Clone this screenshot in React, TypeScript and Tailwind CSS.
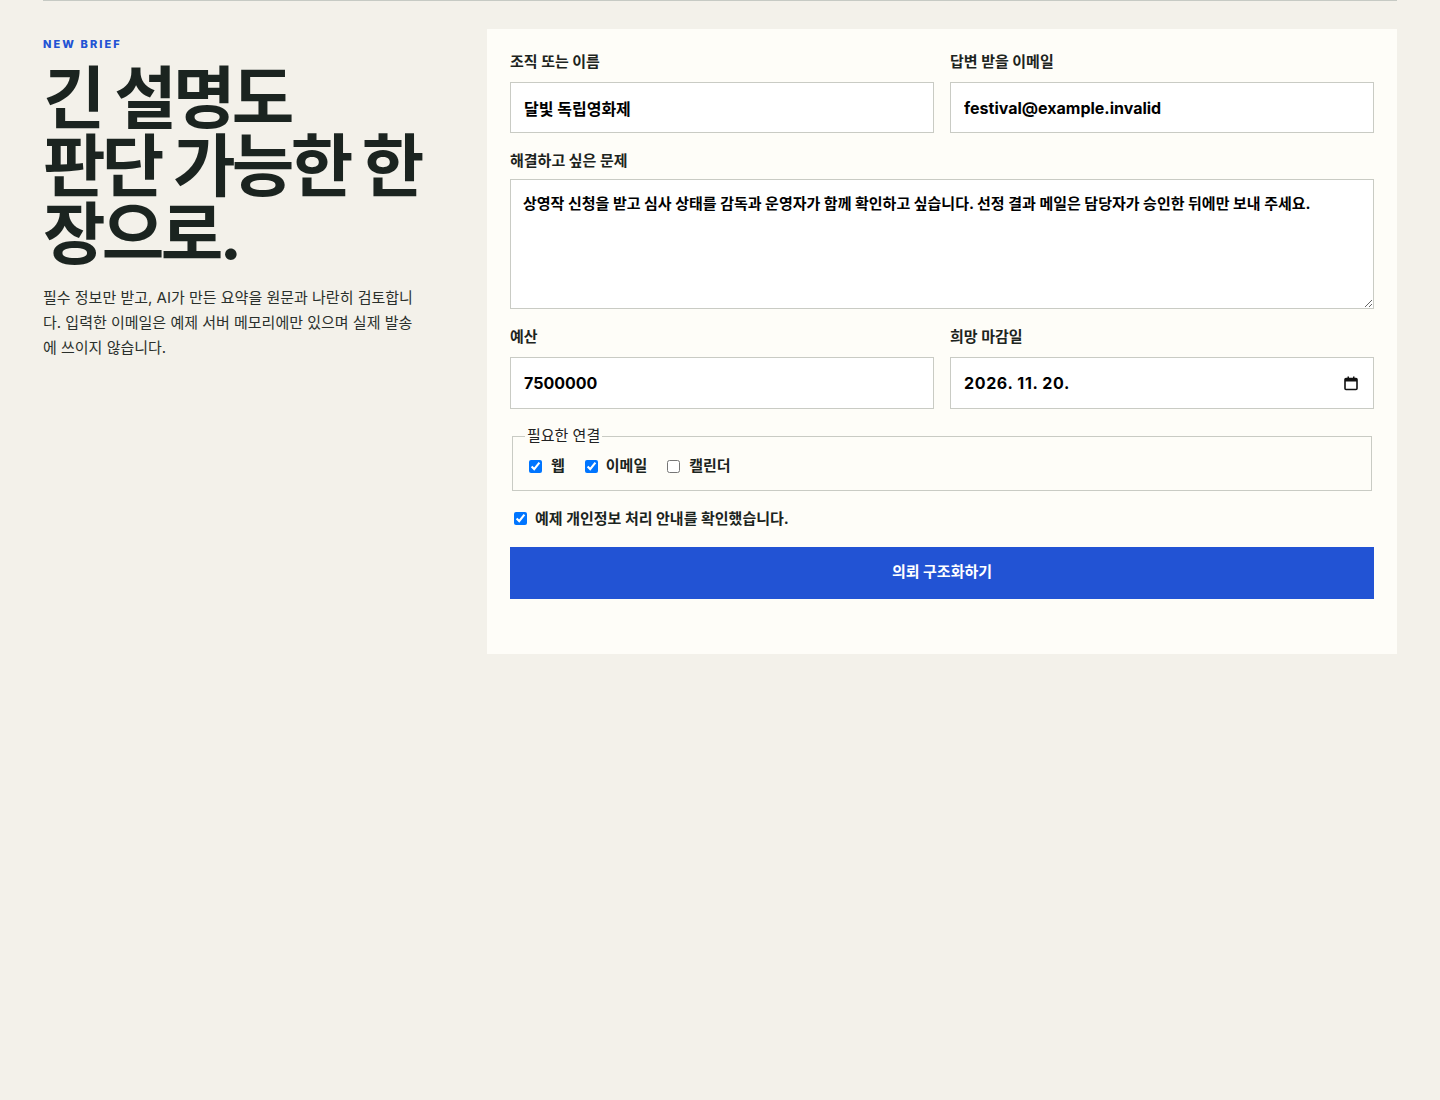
import React from "react";

const font = {
  fontFamily: '"Inter", "Noto Sans CJK KR", sans-serif',
};

function Field({
  label,
  children,
}: {
  label: string;
  children: React.ReactNode;
}) {
  return (
    <label className="flex flex-col gap-[10px]">
      <span className="text-[15px] leading-[20px] font-bold text-[#1d2420]">
        {label}
      </span>
      {children}
    </label>
  );
}

const inputClass =
  "h-[51px] w-full border border-[#c9cbc4] bg-white px-[13px] text-[16px] font-bold text-black outline-none";

export default function App() {
  return (
    <main
      className="min-h-[1100px] w-full bg-[#f3f1ea] px-[43px] text-[#1b2420]"
      style={font}
    >
      <div className="h-px w-full bg-[#c6cac4]" />
      <div className="grid grid-cols-[380px_1fr] gap-[64px] pt-[28px]">
        <section className="pt-[9px]">
          <p className="text-[11px] leading-[13px] font-extrabold tracking-[0.19em] text-[#2253d4]">
            NEW BRIEF
          </p>
          <h1 className="mt-[13px] text-[68px] leading-[68px] font-bold tracking-[-0.055em] text-[#1b2420]">
            긴 설명도
            <br />
            판단 가능한 한 장으로.
          </h1>
          <p className="mt-[17px] pr-[4px] text-[15px] leading-[25px] text-[#2a302c]">
            필수 정보만 받고, AI가 만든 요약을 원문과 나란히 검토합니다. 입력한
            이메일은 예제 서버 메모리에만 있으며 실제 발송에 쓰이지 않습니다.
          </p>
        </section>

        <section className="bg-[#fefdf8] px-[23px] pt-[23px] pb-[55px]">
          <form className="flex flex-col gap-[18px]">
            <div className="grid grid-cols-2 gap-[16px]">
              <Field label="조직 또는 이름">
                <input
                  className={inputClass}
                  defaultValue="달빛 독립영화제"
                  style={font}
                />
              </Field>
              <Field label="답변 받을 이메일">
                <input
                  className={inputClass}
                  defaultValue="festival@example.invalid"
                  style={font}
                />
              </Field>
            </div>

            <label className="flex flex-col gap-[8px]">
              <span className="text-[15px] leading-[20px] font-bold text-[#1d2420]">
                해결하고 싶은 문제
              </span>
              <textarea
                className="h-[130px] w-full resize-y border border-[#c9cbc4] bg-white px-[12px] py-[13px] text-[15px] leading-[22px] font-bold text-black outline-none"
                style={font}
                defaultValue="상영작 신청을 받고 심사 상태를 감독과 운영자가 함께 확인하고 싶습니다. 선정 결과 메일은 담당자가 승인한 뒤에만 보내 주세요."
              />
            </label>

            <div className="grid grid-cols-2 gap-[16px]">
              <Field label="예산">
                <input
                  className={inputClass + " h-[52px]"}
                  defaultValue="7500000"
                  style={font}
                />
              </Field>
              <Field label="희망 마감일">
                <div className="flex h-[52px] w-full items-center justify-between border border-[#c9cbc4] bg-white pr-[15px] pl-[13px]">
                  <span className="text-[16px] font-bold tracking-[0.04em] text-black">
                    2026. 11. 20.
                  </span>
                  <svg width="14" height="15" viewBox="0 0 14 15" fill="none">
                    <rect
                      x="1"
                      y="2.5"
                      width="12"
                      height="11"
                      rx="1"
                      stroke="#111"
                      strokeWidth="1.6"
                    />
                    <rect x="1" y="2.5" width="12" height="3" fill="#111" />
                    <rect x="3.5" y="0.5" width="1.5" height="3" fill="#111" />
                    <rect x="9" y="0.5" width="1.5" height="3" fill="#111" />
                  </svg>
                </div>
              </Field>
            </div>

            <fieldset className="-mt-[1px] mx-[2px] border border-[#c9cbc4] px-[12px] pt-[3px] pb-[12px]">
              <legend className="px-[2px] text-[15px] leading-[20px] text-[#222]">
                필요한 연결
              </legend>
              <div className="mt-[6px] flex items-center pl-[4px]">
                <label className="flex items-center gap-[9px] text-[15px] font-bold">
                  <input type="checkbox" defaultChecked className="m-0 h-[13px] w-[13px]" />
                  웹
                </label>
                <label className="ml-[20px] flex items-center gap-[8px] text-[15px] font-bold">
                  <input type="checkbox" defaultChecked className="m-0 h-[13px] w-[13px]" />
                  이메일
                </label>
                <label className="ml-[20px] flex items-center gap-[9px] text-[15px] font-bold">
                  <input type="checkbox" className="m-0 h-[13px] w-[13px]" />
                  캘린더
                </label>
              </div>
            </fieldset>

            <label className="flex items-center gap-[8px] pl-[4px] text-[15px] leading-[20px] font-bold text-[#1b2420]">
              <input type="checkbox" defaultChecked className="m-0 h-[13px] w-[13px]" />
              예제 개인정보 처리 안내를 확인했습니다.
            </label>

            <button
              type="button"
              className="h-[52px] w-full bg-[#2253d4] text-[15px] font-bold text-white"
              style={font}
            >
              의뢰 구조화하기
            </button>
          </form>
        </section>
      </div>
    </main>
  );
}
